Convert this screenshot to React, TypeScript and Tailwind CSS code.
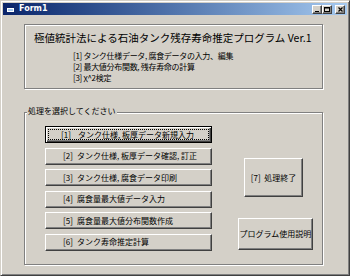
import React from "react";

type MenuButtonProps = {
  num: string,
  label: string,
  isDefault?: boolean
};

// Windows classic 3D push button
function MenuButton({ num, label, isDefault }: MenuButtonProps) {
  const cls = isDefault
    ? "flex h-[17px] w-[167px] items-center border border-black bg-[#d4d0c8] pl-[15px] text-[8px] leading-none text-black shadow-[inset_1px_1px_0_#fff,inset_-1px_-1px_0_#404040,inset_-2px_-2px_0_#808080] outline outline-1 outline-dotted outline-black outline-offset-[-4px]"
    : "flex h-[17px] w-[167px] items-center border border-t-white border-l-white border-r-[#404040] border-b-[#404040] bg-[#d4d0c8] pl-[17px] text-[8px] leading-none text-black shadow-[inset_-1px_-1px_0_#808080]";
  return (
    <button className={cls}>
      <span className={isDefault ? "w-[17px] text-left" : "w-[14px] text-left"}>{num}</span>
      <span>{label}</span>
    </button>
  );
}

function CaptionButton({ children }: { children: React.ReactNode }) {
  return (
    <div className="flex h-[9px] w-[10px] items-center justify-center border border-t-white border-l-white border-r-[#404040] border-b-[#404040] bg-[#d4d0c8] shadow-[inset_-1px_-1px_0_#808080]">
      {children}
    </div>
  );
}

const items = [
  { num: "[1]", label: "タンク仕様, 板厚データ新規入力", isDefault: true },
  { num: "[2]", label: "タンク仕様, 板厚データ確認, 訂正" },
  { num: "[3]", label: "タンク仕様, 腐食データ印刷" },
  { num: "[4]", label: "腐食量最大値データ入力" },
  { num: "[5]", label: "腐食量最大値分布関数作成" },
  { num: "[6]", label: "タンク寿命推定計算" },
];

export default function App() {
  return (
    <div className="flex h-[276px] w-[350px] flex-col border border-t-[#d4d0c8] border-l-[#d4d0c8] border-r-[#404040] border-b-[#404040] bg-[#d4d0c8] p-[2px] font-['Noto_Sans_CJK_JP','Noto_Sans',sans-serif] shadow-[inset_1px_1px_0_#fff,inset_-1px_-1px_0_#808080]">
      {/* title bar */}
      <div className="flex h-[12px] items-center bg-gradient-to-r from-[#0a246a] to-[#a6caf0] pl-[4px] pr-[2px]">
        <svg width="7" height="6" viewBox="0 0 7 6" className="mr-[5px]">
          <rect x="0" y="0" width="7" height="6" fill="#fff" />
          <rect x="0" y="0" width="7" height="2" fill="#0a246a" />
          <rect x="1" y="3" width="5" height="2" fill="#a6caf0" />
        </svg>
        <span className="font-['DejaVu_Sans',sans-serif] text-[8px] font-bold leading-none text-white">Form1</span>
        <div className="ml-auto flex items-center">
          <CaptionButton>
            <svg width="4" height="5" viewBox="0 0 4 5"><rect x="0" y="4" width="4" height="1" fill="#000" /></svg>
          </CaptionButton>
          <CaptionButton>
            <svg width="6" height="5" viewBox="0 0 6 5"><rect x="0.5" y="0.5" width="5" height="4" fill="none" stroke="#000" /><rect x="0" y="0" width="6" height="1.5" fill="#000" /></svg>
          </CaptionButton>
          <div className="ml-[3px]">
            <CaptionButton>
              <svg width="5" height="5" viewBox="0 0 5 5"><path d="M0.5 0.5 L4.5 4.5 M4.5 0.5 L0.5 4.5" stroke="#000" strokeWidth="1.2" /></svg>
            </CaptionButton>
          </div>
        </div>
      </div>

      {/* header panel */}
      <div className="ml-[21px] mt-[9px] h-[65px] w-[299px] border border-[#808080] pl-[9px] pt-[7px] text-black shadow-[inset_1px_1px_0_#fff,1px_1px_0_#fff]">
        <p className="text-[10.5px] leading-[12px]">極値統計法による石油タンク残存寿命推定プログラム Ver.1</p>
        <div className="mt-[6px] pl-[39px] text-[8px] leading-[11px] tracking-[-0.3px]">
          <p>[1] タンク仕様データ, 腐食データの入力、編集</p>
          <p>[2] 最大値分布関数, 残存寿命の計算</p>
          <p>[3] χ^2検定</p>
        </div>
      </div>

      {/* selection frame */}
      <div className="relative ml-[21px] mt-[23px] flex h-[153px] w-[299px] border border-[#808080] pl-[20px] pt-[13px] shadow-[inset_1px_1px_0_#fff,1px_1px_0_#fff]">
        <span className="absolute left-[2px] top-[-7px] bg-[#d4d0c8] px-[1px] text-[8px] leading-[10px] text-black">処理を選択してください</span>
        <div className="flex flex-col gap-[4.5px]">
          {items.map((it) => (
            <MenuButton key={it.num} num={it.num} label={it.label} isDefault={it.isDefault} />
          ))}
        </div>
        <div className="ml-[26px] flex flex-col items-start">
          <button className="ml-[6px] mt-[32px] flex h-[39px] w-[59px] items-center justify-center border border-t-white border-l-white border-r-[#404040] border-b-[#404040] bg-[#d4d0c8] text-[8px] leading-none text-black shadow-[inset_-1px_-1px_0_#808080]">
            <span className="whitespace-pre">[7]  処理終了</span>
          </button>
          <button className="mt-[21px] flex h-[32px] w-[75px] items-center justify-center border border-t-white border-l-white border-r-[#404040] border-b-[#404040] bg-[#d4d0c8] text-[8px] leading-none text-black shadow-[inset_-1px_-1px_0_#808080]">
            プログラム使用説明
          </button>
        </div>
      </div>
    </div>
  );
}
